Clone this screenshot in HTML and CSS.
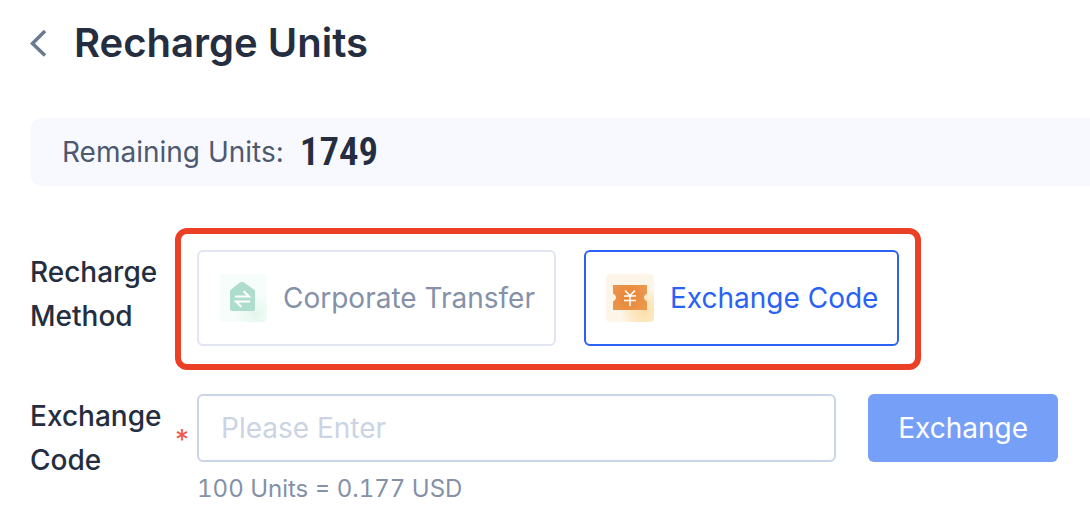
FILE: index.html
```html
<!DOCTYPE html>
<html lang="en">
<head>
<meta charset="utf-8">
<meta name="viewport" content="width=device-width, initial-scale=1">
<title>Recharge Units</title>
<link rel="stylesheet" href="styles.css">
</head>
<body>
<header class="page-header">
  <button class="back" type="button" aria-label="Back">
    <svg width="18" height="28" viewBox="0 0 18 28" fill="none" stroke="#6b7a8f" stroke-width="3.500"><path d="M15 2 2.500 14.500l12.500 12"/></svg>
  </button>
  <h1 class="title">Recharge Units</h1>
</header>
<main>
  <p class="balance"><span>Remaining Units:</span><strong class="balance-value">1749</strong></p>
  <form class="form">
    <div class="row">
      <div class="label" id="method-label">Recharge Method</div>
      <div class="methods" role="radiogroup" aria-labelledby="method-label">
        <label class="method method-muted">
          <input class="method-input" type="radio" name="method">
          <svg width="48" height="48" viewBox="0 0 48 48">
            <defs><radialGradient id="mint" gradientUnits="userSpaceOnUse" cx="36" cy="40" r="20"><stop offset="0" stop-color="#e3f6eb"/><stop offset=".4" stop-color="#ebf9f2"/><stop offset="1" stop-color="#f6fdfb"/></radialGradient></defs>
            <rect width="48" height="48" rx="4" fill="url(#mint)"/>
            <path d="M21 8.500q2-1.500 4 0l10 7q1 .7 1 2V35q0 2-2 2H13q-2 0-2-2V17.500q0-1.300 1-2Z" fill="#aedccd"/>
            <path d="M16 22.500h14L24.500 17M31 27.500H17l5.500 5.500" fill="none" stroke="#fff" stroke-width="2"/>
          </svg>
          <span>Corporate Transfer</span>
        </label>
        <label class="method">
          <input class="method-input" type="radio" name="method" checked>
          <svg width="48" height="48" viewBox="0 0 48 48">
            <defs>
              <radialGradient id="sand" gradientUnits="userSpaceOnUse" cx="38" cy="37" r="24"><stop offset="0" stop-color="#fbdfa6"/><stop offset=".45" stop-color="#fce7bf"/><stop offset="1" stop-color="#fdf6e8"/></radialGradient>
              <radialGradient id="ticket" gradientUnits="userSpaceOnUse" cx="22" cy="23" r="20"><stop offset="0" stop-color="#e98534"/><stop offset="1" stop-color="#eb9850"/></radialGradient>
            </defs>
            <rect width="48" height="48" rx="4" fill="url(#sand)"/>
            <path d="M7 11h34v8.500l-2 1.500q-2 2.500 0 5l2 1.500V36H7v-8.500l2-1.500q2-2.500 0-5l-2-1.500Z" fill="url(#ticket)"/>
            <path d="m19 16.500 5 5 5-5M24 21.500v10.500M18 22h12M18 26.500h12" fill="none" stroke="#fff" stroke-width="1.600"/>
          </svg>
          <span>Exchange Code</span>
        </label>
      </div>
    </div>
    <div class="row">
      <label class="label" for="code">Exchange Code</label>
      <div class="field">
        <span class="required" aria-hidden="true">*</span>
        <div class="entry">
          <input class="code-input" id="code" type="text" placeholder="Please Enter" required>
          <p class="hint">100 Units = 0.177 USD</p>
        </div>
        <button class="submit" type="button">Exchange</button>
      </div>
    </div>
  </form>
</main>
</body>
</html>
```
FILE: styles.css
```css
* { box-sizing: border-box; }
body {
  margin: 0;
  padding: 16px 0 20px 30px;
  background: #fff;
  color: #242e40;
  font: 400 28px/44px Inter, sans-serif;
}
h1, p { margin: 0; }
button, input { font: inherit; }
svg { display: block; flex: none; }
.page-header {
  display: flex;
  align-items: center;
  gap: 26px;
  height: 54px;
}
.back {
  padding: 0;
  border: 0;
  background: none;
  cursor: pointer;
}
.title { font-size: 40px; line-height: 52px; font-weight: 600; }
.balance {
  display: flex;
  align-items: center;
  gap: 16px;
  margin-top: 48px;
  padding: 12px 32px;
  border-radius: 12px 0 0 12px;
  background: #f8f9ff;
  color: #4e596f;
}
.balance-value {
  color: #242e40;
  font: 600 39px/44px "Roboto Condensed", Roboto, sans-serif;
}
.form {
  display: flex;
  flex-direction: column;
  gap: 24px;
  margin-top: 42px;
  padding-right: 32px;
}
.row {
  display: grid;
  grid-template-columns: 145px minmax(0, 1fr);
  align-items: start;
}
.label { font-weight: 500; }
.row:first-child > .label { padding-top: 22px; }
.methods {
  display: flex;
  gap: 28px;
  justify-self: start;
  padding: 16px 16px 18px;
  border: 6px solid #eb4025;
  border-radius: 12px;
}
.method {
  display: flex;
  align-items: center;
  gap: 16px;
  padding: 22px 19px 22px 20px;
  border: 2px solid #e0e5f1;
  border-radius: 6px;
  color: #2962f5;
  white-space: nowrap;
  cursor: pointer;
}
.method-muted { color: #8491a8; }
.method:has(:checked) { border-color: #2962f5; }
.method-input {
  position: absolute;
  opacity: 0;
  pointer-events: none;
}
.field {
  display: grid;
  grid-template-columns: 22px minmax(0, 1fr) auto;
  align-items: start;
}
.required { padding-top: 24px; color: #f2564f; }
.code-input {
  display: block;
  width: 100%;
  height: 68px;
  padding: 0 22px;
  border: 2px solid #cbd4e4;
  border-radius: 6px;
  background: #fff;
  color: #242e40;
}
.code-input::placeholder { color: #cbd4e4; opacity: 1; }
.hint {
  margin-top: 10px;
  color: #8491a8;
  font-size: 24px;
  line-height: 34px;
  font-variant-numeric: tabular-nums;
}
.submit {
  height: 68px;
  margin-left: 32px;
  padding: 0 30px;
  border: 0;
  border-radius: 6px;
  background: #769ff8;
  color: #fff;
  cursor: pointer;
}
```
